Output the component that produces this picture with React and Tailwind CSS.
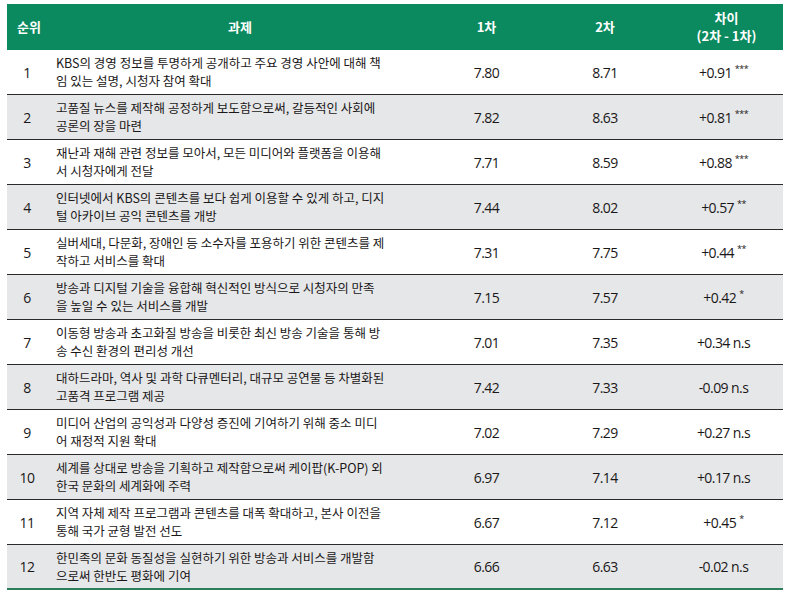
import React from 'react';

const rows = [
  ['1', ['KBS의 경영 정보를 투명하게 공개하고 주요 경영 사안에 대해 책', '임 있는 설명, 시청자 참여 확대'], '7.80', '8.71', '+0.91', '***'],
  ['2', ['고품질 뉴스를 제작해 공정하게 보도함으로써, 갈등적인 사회에', '공론의 장을 마련'], '7.82', '8.63', '+0.81', '***'],
  ['3', ['재난과 재해 관련 정보를 모아서, 모든 미디어와 플랫폼을 이용해', '서 시청자에게 전달'], '7.71', '8.59', '+0.88', '***'],
  ['4', ['인터넷에서 KBS의 콘텐츠를 보다 쉽게 이용할 수 있게 하고, 디지', '털 아카이브 공익 콘텐츠를 개방'], '7.44', '8.02', '+0.57', '**'],
  ['5', ['실버세대, 다문화, 장애인 등 소수자를 포용하기 위한 콘텐츠를 제', '작하고 서비스를 확대'], '7.31', '7.75', '+0.44', '**'],
  ['6', ['방송과 디지털 기술을 융합해 혁신적인 방식으로 시청자의 만족', '을 높일 수 있는 서비스를 개발'], '7.15', '7.57', '+0.42', '*'],
  ['7', ['이동형 방송과 초고화질 방송을 비롯한 최신 방송 기술을 통해 방', '송 수신 환경의 편리성 개선'], '7.01', '7.35', '+0.34 n.s', ''],
  ['8', ['대하드라마, 역사 및 과학 다큐멘터리, 대규모 공연물 등 차별화된', '고품격 프로그램 제공'], '7.42', '7.33', '-0.09 n.s', ''],
  ['9', ['미디어 산업의 공익성과 다양성 증진에 기여하기 위해 중소 미디', '어 재정적 지원 확대'], '7.02', '7.29', '+0.27 n.s', ''],
  ['10', ['세계를 상대로 방송을 기획하고 제작함으로써 케이팝(K-POP) 외', '한국 문화의 세계화에 주력'], '6.97', '7.14', '+0.17 n.s', ''],
  ['11', ['지역 자체 제작 프로그램과 콘텐츠를 대폭 확대하고, 본사 이전을', '통해 국가 균형 발전 선도'], '6.67', '7.12', '+0.45', '*'],
  ['12', ['한민족의 문화 동질성을 실현하기 위한 방송과 서비스를 개발함', '으로써 한반도 평화에 기여'], '6.66', '6.63', '-0.02 n.s', ''],
];

const cols = 'grid grid-cols-[40px_386px_107px_130px_113px]';

export default function App() {
  return (
    <div className="w-[792px] h-[596px] bg-white pt-[4px] pl-[7px] font-['Noto_Sans_CJK_KR','Noto_Sans',sans-serif] text-[#1a1718]">
      <div className="w-[776px]">
        {/* header */}
        <div className={`${cols} h-[46px] bg-[#0b8a5f] text-white font-bold text-[13px] leading-[18px]`}>
          <div className="flex items-center pl-[10px]">순위</div>
          <div className="flex items-center justify-center">과제</div>
          <div className="flex items-center justify-center">1차</div>
          <div className="flex items-center justify-center">2차</div>
          <div className="flex flex-col items-center justify-center">
            <span>차이</span>
            <span>(2차 - 1차)</span>
          </div>
        </div>

        {rows.map(([no, text, a, b, diff, stars], i) => (
          <div
            key={no}
            className={`${cols} h-[45px] ${i % 2 ? 'bg-[#e6e7e8]' : 'bg-white'} ${i === rows.length - 1 ? 'border-b-2 border-[#2e7d5b]' : 'border-b border-[#2b2b2b]'}`}
          >
            <div className="flex items-center justify-center text-[14px] font-['Open_Sans',sans-serif] tracking-[-0.03em]">{no}</div>
            <div className="flex flex-col justify-center pl-[9px] text-[12.5px] leading-[18px] whitespace-nowrap">
              <span>{text[0]}</span>
              <span>{text[1]}</span>
            </div>
            <div className="flex items-center justify-center text-[14px] font-['Open_Sans',sans-serif] tracking-[-0.04em]">{a}</div>
            <div className="flex items-center justify-center text-[14px] font-['Open_Sans',sans-serif] tracking-[-0.04em]">{b}</div>
            <div className="flex items-center justify-center pr-[6px] text-[14px] font-['Open_Sans',sans-serif] tracking-[-0.04em]">
              {diff}
              {stars && <span className="text-[9px] ml-[3px] -mt-[6px]">{stars}</span>}
            </div>
          </div>
        ))}
      </div>
    </div>
  );
}
